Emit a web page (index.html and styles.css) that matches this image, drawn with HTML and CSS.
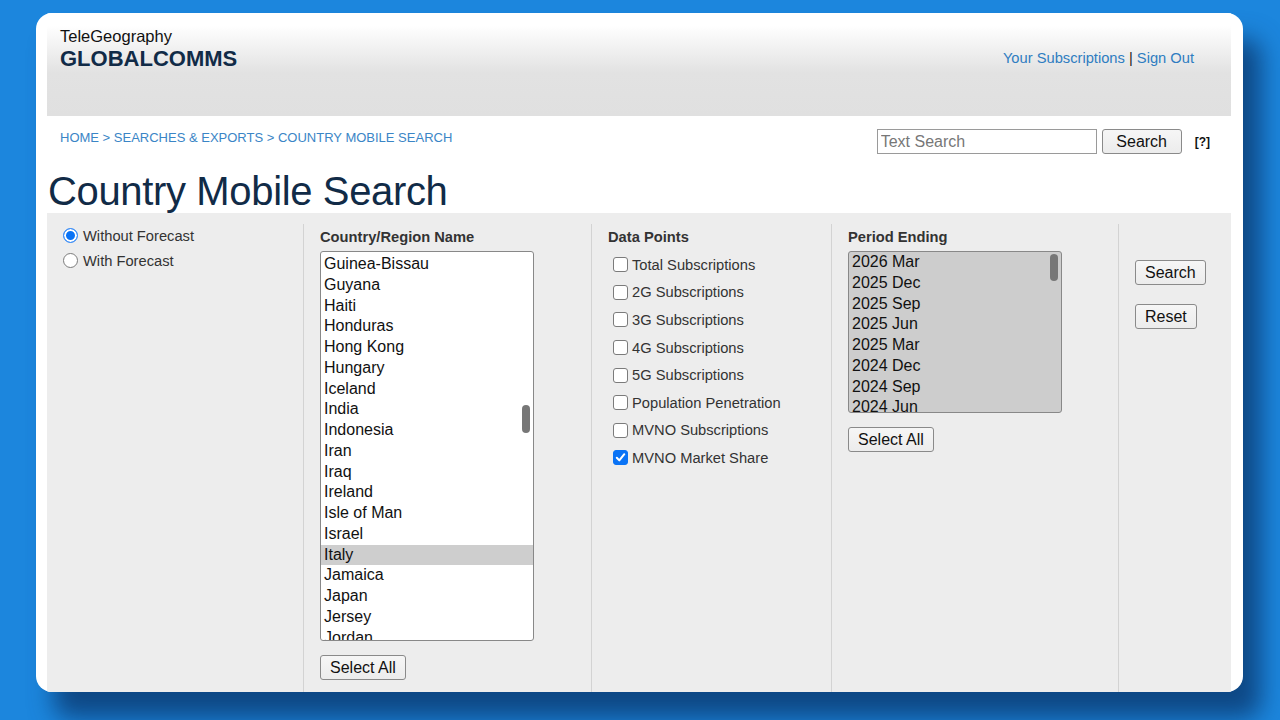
FILE: index.html
```html
<!DOCTYPE html>
<html lang="en">
<head>
    <meta charset="UTF-8">
    <meta name="viewport" content="width=device-width, initial-scale=1.0">
    <title>Country Mobile Search | GlobalComms</title>
    <link rel="stylesheet" href="styles.css">
</head>
<body>
<div class="card">
    <div class="masthead">
        <div class="brand">
            <div class="tg">TeleGeography</div>
            <div class="gc">GLOBALCOMMS</div>
        </div>
        <div class="account"><a href="#">Your Subscriptions</a> | <a href="#">Sign Out</a></div>
    </div>

    <div class="crumbbar">
        <div class="crumbs"><a href="#">HOME</a> &gt; <a href="#">SEARCHES &amp; EXPORTS</a> &gt; <a href="#">COUNTRY MOBILE SEARCH</a></div>
        <div class="textsearch">
            <input type="text" class="tsinput" placeholder="Text Search">
            <button class="btn tsbtn">Search</button>
            <b class="help">[?]</b>
        </div>
    </div>

    <h1>Country Mobile Search</h1>

    <form class="panel">
        <div class="col">
            <label class="radio"><span class="dot on"></span>Without Forecast</label>
            <label class="radio"><span class="dot"></span>With Forecast</label>
        </div>

        <div class="col">
            <div class="colhead">Country/Region Name</div>
            <div class="listbox countries">
                <div class="opt">Guinea-Bissau</div>
                <div class="opt">Guyana</div>
                <div class="opt">Haiti</div>
                <div class="opt">Honduras</div>
                <div class="opt">Hong Kong</div>
                <div class="opt">Hungary</div>
                <div class="opt">Iceland</div>
                <div class="opt">India</div>
                <div class="opt">Indonesia</div>
                <div class="opt">Iran</div>
                <div class="opt">Iraq</div>
                <div class="opt">Ireland</div>
                <div class="opt">Isle of Man</div>
                <div class="opt">Israel</div>
                <div class="opt sel">Italy</div>
                <div class="opt">Jamaica</div>
                <div class="opt">Japan</div>
                <div class="opt">Jersey</div>
                <div class="opt">Jordan</div>
                <span class="thumb"></span>
            </div>
            <button type="button" class="btn selall">Select All</button>
        </div>

        <div class="col">
            <div class="colhead">Data Points</div>
            <div class="checks">
                <label class="check"><span class="box"></span>Total Subscriptions</label>
                <label class="check"><span class="box"></span>2G Subscriptions</label>
                <label class="check"><span class="box"></span>3G Subscriptions</label>
                <label class="check"><span class="box"></span>4G Subscriptions</label>
                <label class="check"><span class="box"></span>5G Subscriptions</label>
                <label class="check"><span class="box"></span>Population Penetration</label>
                <label class="check"><span class="box"></span>MVNO Subscriptions</label>
                <label class="check"><span class="box on"><svg width="11" height="11" viewBox="0 0 11 11"><path d="M1.8 5.8 L4.3 8.4 L9.3 2.2" fill="none" stroke="#fff" stroke-width="2" stroke-linecap="round" stroke-linejoin="round"/></svg></span>MVNO Market Share</label>
            </div>
        </div>

        <div class="col">
            <div class="colhead">Period Ending</div>
            <div class="listbox periods">
                <div class="opt">2026 Mar</div>
                <div class="opt">2025 Dec</div>
                <div class="opt">2025 Sep</div>
                <div class="opt">2025 Jun</div>
                <div class="opt">2025 Mar</div>
                <div class="opt">2024 Dec</div>
                <div class="opt">2024 Sep</div>
                <div class="opt">2024 Jun</div>
                <span class="thumb"></span>
            </div>
            <button type="button" class="btn selall">Select All</button>
        </div>

        <div class="col actions">
            <button type="button" class="btn">Search</button>
            <button type="button" class="btn">Reset</button>
        </div>
    </form>
</div>
</body>
</html>
```

FILE: styles.css
```css
*{margin:0px;padding:0px;box-sizing:border-box;font-family:"Liberation Sans", Arial, Helvetica, sans-serif;}

body{background:#1c86dd;padding:13px 37px 0px 36px;height:720px;overflow:hidden;}

a{color:#2f7dc1;text-decoration:none;}

.card{
    background:#fff;
    height:679px;
    border-radius:16px;
    overflow:hidden;
    padding:0px 12px 0px 11px;
    box-shadow:18px 26px 24px rgba(8,46,96,0.7);
}

/* top bar */
.masthead{
    height:103px;
    display:flex;justify-content:space-between;align-items:flex-start;
    padding:14px 37px 0px 13px;
    background:linear-gradient(to bottom,#fff 0%,#fff 12%,#e2e2e2 58%,#e0e0e0 100%);
}
.tg{font-size:16.5px;line-height:19px;color:#111;}
.gc{font-size:22px;line-height:26px;font-weight:bold;color:#112b47;}
.account{font-size:14.7px;line-height:18px;color:#222;padding-top:22px;}

/* breadcrumb + text search */
.crumbbar{display:flex;justify-content:space-between;align-items:flex-start;padding:13px 21px 0px 13px;}
.crumbs{font-size:13px;line-height:16px;margin-top:1px;color:#3a85c6;}
.crumbs a{color:#3a85c6;}
.textsearch{display:flex;align-items:flex-start;}
.tsinput{
    width:220px;height:25px;
    border:1px solid #9a9a9a;
    font-size:16px;padding:0px 3px;color:#222;
}
.tsinput::placeholder{color:#777;}
.tsbtn{margin-left:5px;width:80px;height:23px;}
.help{font-size:12px;margin-left:13px;margin-top:6px;color:#111;}

h1{font-size:40px;font-weight:normal;letter-spacing:-0.35px;line-height:43px;color:#112b47;margin:16px 0px 0px 1px;}

.btn{
    background:linear-gradient(#f6f6f6,#ececec);
    border:1px solid #8a8a8a;border-radius:3px;
    font-size:16px;color:#111;
    height:25px;padding:0px 9px;
    display:block;
}

/* the form */
.panel{
    background:#ededed;
    height:500px;
    padding-top:11px;
    display:grid;
    grid-template-columns:256px 288px 240px 287px 1fr;
}
.col{padding:4px 0px 0px 16px;border-left:1px solid #d3d3d3;}
.col:first-child{border-left:none;}

.colhead{font-size:14.7px;line-height:18px;font-weight:bold;color:#333;margin-bottom:5px;}

.radio{display:flex;align-items:center;height:25px;font-size:14.7px;color:#333;margin-top:-5px;}
.radio + .radio{margin-top:0px;}
.dot{
    width:15px;height:15px;border-radius:50%;
    border:1px solid #7b7b7b;background:#fff;
    margin-right:5px;flex-shrink:0;
}
.dot.on{background:#0a73f5;box-shadow:inset 0 0 0 2px #fff;border:1px solid #3d8ef7;}

.listbox{
    position:relative;
    background:#fff;
    border:1px solid #888;border-radius:3px;
    overflow:hidden;
    width:214px;
}
.opt{font-size:16px;line-height:20.75px;height:20.75px;padding-left:3px;color:#111;white-space:nowrap;}
.opt.sel{background:#cecece;}
.countries{height:390px;padding-top:2px;}
.periods{height:162px;background:#cdcdcd;padding-top:0px;}

/* overlay scrollbar */
.thumb{position:absolute;right:3px;width:8px;border-radius:4px;background:#777;}
.countries .thumb{top:153px;height:28px;}
.periods .thumb{top:2px;height:27px;}

.selall{margin-top:14px;}

.checks{margin-top:4px;}
.check{display:flex;align-items:center;height:27.6px;font-size:14.7px;color:#333;}
.box{
    width:15px;height:15px;border-radius:3px;
    border:1px solid #7b7b7b;background:#fff;
    margin:0px 4px 0px 5px;flex-shrink:0;
    display:flex;justify-content:center;align-items:center;
}
.box.on{background:#0a73f5;border-color:#0a73f5;}

.actions{padding-top:36px;}
.actions .btn + .btn{margin-top:19px;}
```
